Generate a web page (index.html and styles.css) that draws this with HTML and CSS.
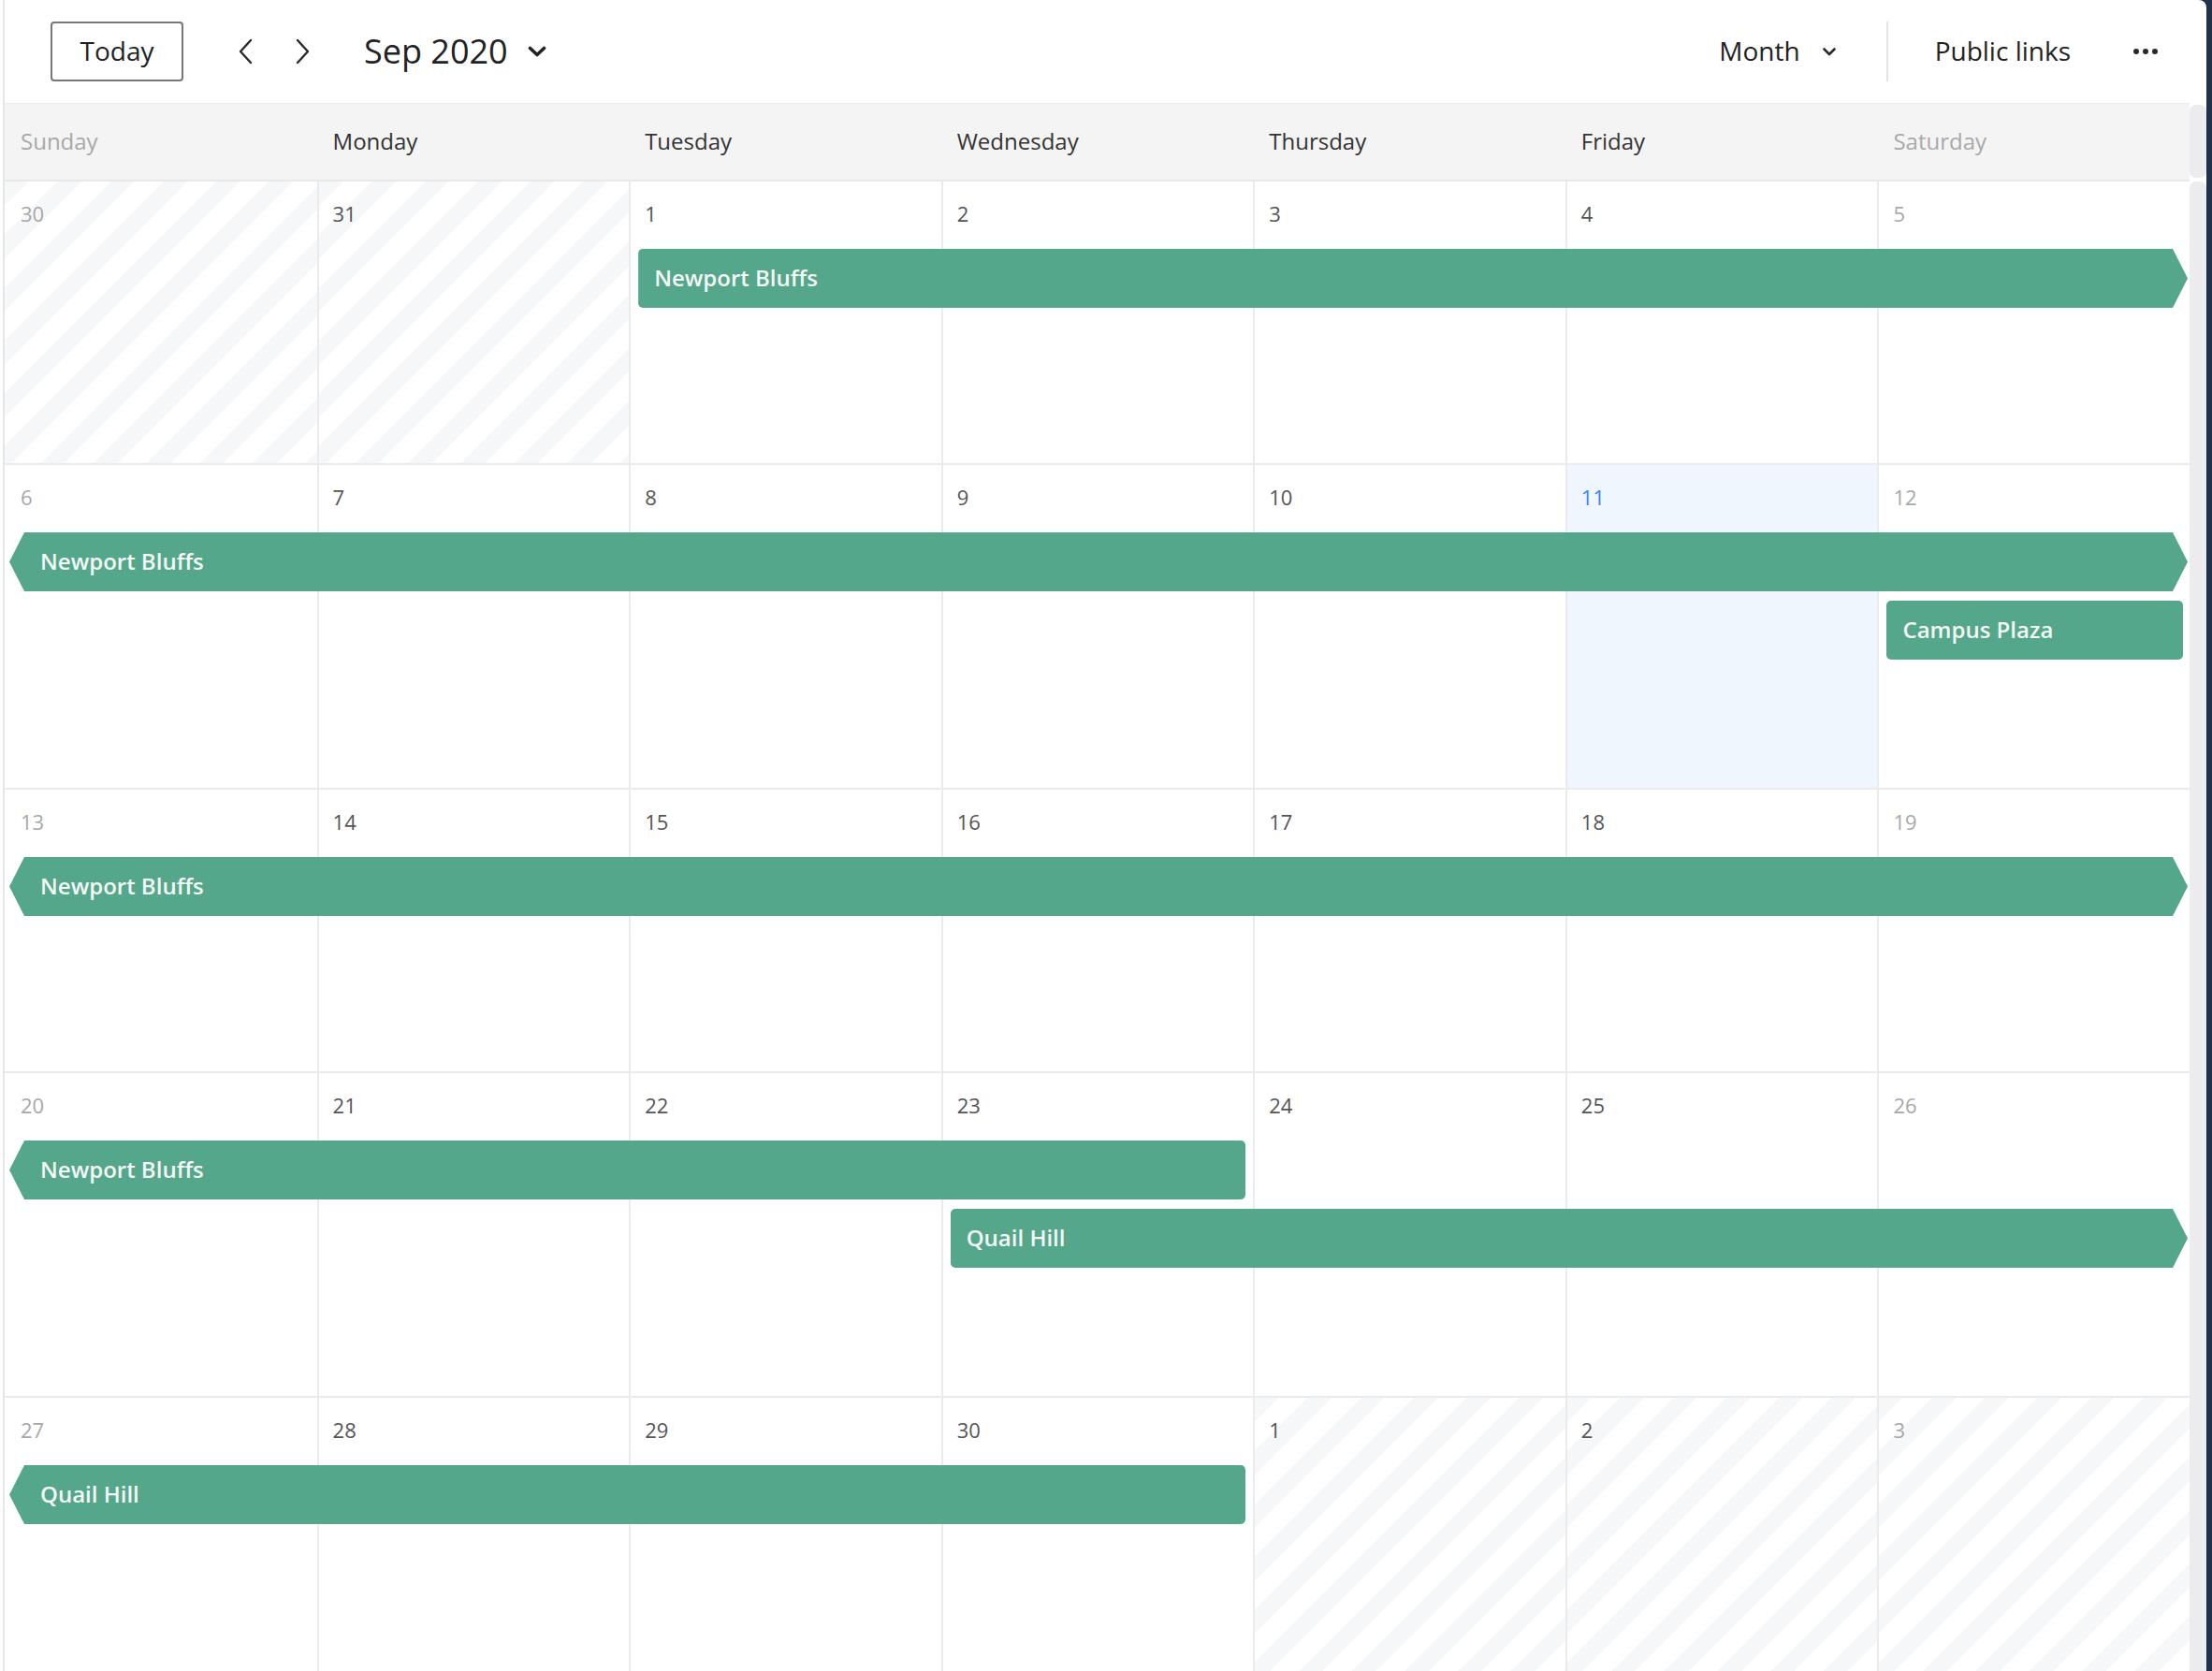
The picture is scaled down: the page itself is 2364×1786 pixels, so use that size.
FILE: index.html
```html
<!DOCTYPE html>
<html lang="en">
<head>
    <meta charset="UTF-8">
    <meta name="viewport" content="width=device-width, initial-scale=1.0">
    <title>Calendar - Sep 2020</title>
    <link rel="stylesheet" href="styles.css">
</head>
<body>
<div class="app">
  <div class="frame">
    <header class="toolbar">
        <div class="tb-left">
            <button class="btn-today">Today</button>
            <span class="nav-arrow prev">
                <svg width="16" height="28" viewBox="0 0 16 28"><path d="M14 2 L3 14 L14 26"/></svg>
            </span>
            <span class="nav-arrow next">
                <svg width="16" height="28" viewBox="0 0 16 28"><path d="M2 2 L13 14 L2 26"/></svg>
            </span>
            <span class="period">Sep 2020</span>
            <svg class="period-caret" width="20" height="12" viewBox="0 0 20 12"><path d="M2.5 2.5 L10 9.5 L17.5 2.5"/></svg>
        </div>
        <div class="tb-right">
            <span class="view-select">Month</span>
            <svg class="view-caret" width="14" height="9" viewBox="0 0 14 9"><path d="M1.5 1.5 L7 7 L12.5 1.5"/></svg>
            <span class="divider"></span>
            <span class="public-links">Public links</span>
            <svg class="more" width="26" height="6" viewBox="0 0 26 6"><circle cx="3" cy="3" r="3"/><circle cx="13" cy="3" r="3"/><circle cx="23" cy="3" r="3"/></svg>
        </div>
    </header>

    <div class="main">
        <div class="calendar">
            <div class="dow-row">
                <div class="dow weekend">Sunday</div>
                <div class="dow">Monday</div>
                <div class="dow">Tuesday</div>
                <div class="dow">Wednesday</div>
                <div class="dow">Thursday</div>
                <div class="dow">Friday</div>
                <div class="dow weekend">Saturday</div>
            </div>

            <!-- week 1 -->
            <div class="week">
                <div class="cell weekend outside"><span class="num">30</span></div>
                <div class="cell outside"><span class="num">31</span></div>
                <div class="cell"><span class="num">1</span></div>
                <div class="cell"><span class="num">2</span></div>
                <div class="cell"><span class="num">3</span></div>
                <div class="cell"><span class="num">4</span></div>
                <div class="cell weekend"><span class="num">5</span></div>
                <div class="ev r lane1 from-3 to-end">Newport Bluffs</div>
            </div>

            <!-- week 2 -->
            <div class="week tall">
                <div class="cell weekend"><span class="num">6</span></div>
                <div class="cell"><span class="num">7</span></div>
                <div class="cell"><span class="num">8</span></div>
                <div class="cell"><span class="num">9</span></div>
                <div class="cell"><span class="num">10</span></div>
                <div class="cell today"><span class="num">11</span></div>
                <div class="cell weekend"><span class="num">12</span></div>
                <div class="ev l r lane1 from-1 to-end">Newport Bluffs</div>
                <div class="ev lane2 from-7 to-end campus">Campus Plaza</div>
            </div>

            <!-- week 3 -->
            <div class="week">
                <div class="cell weekend"><span class="num">13</span></div>
                <div class="cell"><span class="num">14</span></div>
                <div class="cell"><span class="num">15</span></div>
                <div class="cell"><span class="num">16</span></div>
                <div class="cell"><span class="num">17</span></div>
                <div class="cell"><span class="num">18</span></div>
                <div class="cell weekend"><span class="num">19</span></div>
                <div class="ev l r lane1 from-1 to-end">Newport Bluffs</div>
            </div>

            <!-- week 4 -->
            <div class="week tall">
                <div class="cell weekend"><span class="num">20</span></div>
                <div class="cell"><span class="num">21</span></div>
                <div class="cell"><span class="num">22</span></div>
                <div class="cell"><span class="num">23</span></div>
                <div class="cell"><span class="num">24</span></div>
                <div class="cell"><span class="num">25</span></div>
                <div class="cell weekend"><span class="num">26</span></div>
                <div class="ev l lane1 from-1 to-5">Newport Bluffs</div>
                <div class="ev r lane2 from-4 to-end">Quail Hill</div>
            </div>

            <!-- week 5 -->
            <div class="week last">
                <div class="cell weekend"><span class="num">27</span></div>
                <div class="cell"><span class="num">28</span></div>
                <div class="cell"><span class="num">29</span></div>
                <div class="cell"><span class="num">30</span></div>
                <div class="cell outside"><span class="num">1</span></div>
                <div class="cell outside"><span class="num">2</span></div>
                <div class="cell weekend outside"><span class="num">3</span></div>
                <div class="ev l lane1 from-1 to-5">Quail Hill</div>
            </div>
        </div>

        <div class="scrollbar">
            <span class="sb-cap"></span>
            <span class="sb-track"></span>
        </div>
    </div>
  </div>
</div>
</body>
</html>
```

FILE: styles.css
```css
html, body { margin: 0; height: 100%; }
body {
    background: #1f3249;
    font-family: "Open Sans", "Noto Sans", Arial, sans-serif;
    color: #222;
    overflow: hidden;
}

.app {
    width: 2358px; height: 100vh;
    box-sizing: border-box;
    padding-left: 3px;
    background: #fff;
    border-top-right-radius: 8px;
}
.frame {
    height: 100%;
    border-left: 2px solid #e6e6e6;
    display: flex; flex-direction: column;
}

/* top toolbar */
.toolbar {
    height: 110px; flex: none;
    display: flex; align-items: center; justify-content: space-between;
    padding: 0 52px 0 49px;
    box-sizing: border-box;
}
.tb-left, .tb-right { display: flex; align-items: center; }

.btn-today {
    width: 142px; height: 64px;
    border: 2px solid #777; border-radius: 4px;
    background: #fff;
    font: 28px "Open Sans", sans-serif; color: #222;
    padding: 0 0 2px; cursor: pointer;
}
.nav-arrow { display: flex; }
.nav-arrow svg path, .period-caret path, .view-caret path {
    fill: none; stroke: #2a2a2a; stroke-linecap: round; stroke-linejoin: round;
}
.nav-arrow svg path { stroke-width: 2.4; }
.nav-arrow.prev { margin-left: 58px; }
.nav-arrow.next { margin-left: 46px; }

.period { margin-left: 57px; font-size: 36px; color: #222; margin-bottom: 2px; }
.period-caret { margin-left: 21px; }
.period-caret path { stroke-width: 3.6; stroke: #222; }

.view-select { font-size: 28px; color: #222; margin: 0 2px 2px 0; }
.view-caret { margin-left: 22px; }
.view-caret path { stroke-width: 2.6; }
.divider { width: 2px; height: 64px; background: #e2e2e2; margin: 0 50px 0 54px; }
.public-links { font-size: 28px; color: #222; margin-bottom: 2px; }
.more { margin-left: 67px; fill: #2a2a2a; }

/* calendar body */
.main { flex: 1; display: flex; min-height: 0; }
.calendar { flex: 1; overflow: hidden; }

.dow-row {
    display: grid; grid-template-columns: repeat(7, 1fr);
    height: 84px; box-sizing: border-box;
    background: #f4f4f4;
    border-top: 1px solid #ebebeb;
    border-bottom: 2px solid #e8e8e8;
}
.dow {
    display: flex; align-items: center;
    padding: 0 0 3px 17px;
    font-size: 24px; color: #333;
}
.dow.weekend { color: #a9a9a9; }

.week {
    display: grid;
    grid-template-columns: repeat(7, 1fr);
    grid-template-rows: 72px 63px 10px 63px 1fr;
    height: 303px; box-sizing: border-box;
    border-bottom: 2px solid #ebebeb;
}
.week.tall { height: 347px; }
.week.last { height: 400px; border-bottom: 0; }

.cell {
    grid-row: 1 / -1;
    border-left: 2px solid #ebebeb;
    padding: 19px 15px 0;
    background: #fff;
}
.cell:nth-child(1) { grid-column: 1; border-left: 0; padding-left: 17px; }
.cell:nth-child(2) { grid-column: 2; }
.cell:nth-child(3) { grid-column: 3; }
.cell:nth-child(4) { grid-column: 4; }
.cell:nth-child(5) { grid-column: 5; }
.cell:nth-child(6) { grid-column: 6; }
.cell:nth-child(7) { grid-column: 7; }

.num { font-size: 22px; line-height: 30px; color: #555; }
.cell.weekend .num { color: #a8a8a8; }
.cell.outside {
    background: repeating-linear-gradient(135deg, #f6f7f9 0 18px, #fff 18px 40px);
}
.cell.today { background: #f0f6fe; }
.cell.today .num { color: #3d80f2; }

/* event bars */
.ev {
    display: flex; align-items: center;
    background: #54a78b;
    color: #f4f8f6;
    font-size: 24px; font-weight: 600;
    white-space: nowrap; overflow: hidden;
    padding: 0 0 2px 17px;
    margin: 0 8px 0 10px;
    border-radius: 5px;
}
.ev.lane1 { grid-row: 2; }
.ev.lane2 { grid-row: 4; }
.ev.from-1 { grid-column-start: 1; }
.ev.from-3 { grid-column-start: 3; }
.ev.from-4 { grid-column-start: 4; }
.ev.from-7 { grid-column-start: 7; }
.ev.to-5 { grid-column-end: 5; }
.ev.to-end { grid-column-end: 8; }
.ev.campus { margin-right: 7px; }

.ev.l {
    margin-left: 5px; padding-left: 33px;
    clip-path: polygon(16px 0, 100% 0, 100% 100%, 16px 100%, 0 50%);
}
.ev.r {
    margin-right: 2px;
    clip-path: polygon(0 0, calc(100% - 16px) 0, 100% 50%, calc(100% - 16px) 100%, 0 100%);
}
.ev.l.r {
    clip-path: polygon(16px 0, calc(100% - 16px) 0, 100% 50%, calc(100% - 16px) 100%, 16px 100%, 0 50%);
}

/* scrollbar gutter */
.scrollbar {
    width: 18px; flex: none;
    display: flex; flex-direction: column; gap: 4px;
    padding-top: 2px;
}
.sb-cap { height: 78px; background: #ececee; border-radius: 7px; }
.sb-track { flex: 1; background: #ececee; border-radius: 7px 7px 0 0; }
```
